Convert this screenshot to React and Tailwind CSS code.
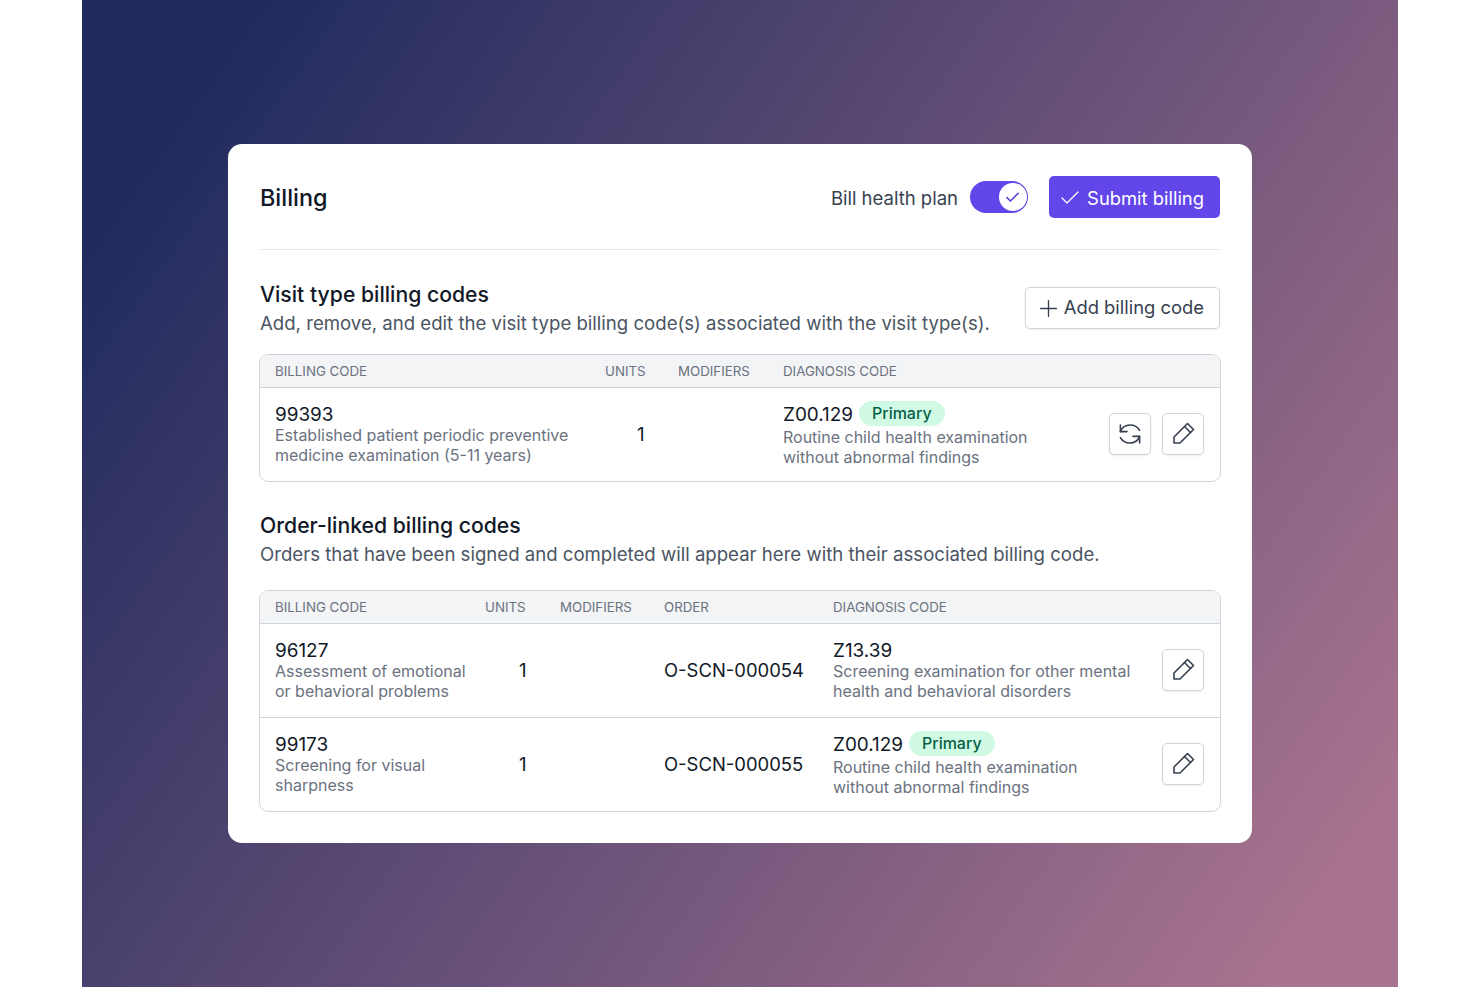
import React from 'react';
import { Check, Plus } from 'lucide-react';

const PencilIcon = () => (
  <svg width="24" height="24" viewBox="0 0 24 24" fill="none" stroke="currentColor" strokeWidth="1.6" strokeLinejoin="round" strokeLinecap="round">
    <path d="M3 21v-6L16.5 1.5l6 6L9 21H3z" />
    <path d="M13.5 4.5l6 6" />
  </svg>
);

const SwapIcon = () => (
  <svg width="24" height="24" viewBox="2 2 20 20" fill="none" stroke="currentColor" strokeWidth="1.35" strokeLinejoin="round" strokeLinecap="round">
    <path d="M4 4.5V10h5.5" />
    <path d="M4 10C5.5 6.2 8.5 4.5 12 4.5c3.5 0 6.5 1.8 8 4.5" />
    <path d="M20 19.5V14h-5.5" />
    <path d="M20 14c-1.5 3.8-4.5 5.5-8 5.5S5.5 17.7 4 15" />
  </svg>
);

const IconButton = ({ children }) => (
  <button className="mb-[2px] flex h-[42px] w-[42px] items-center justify-center rounded-[5px] border border-[#d1d5db] bg-white text-[#374151] shadow-[0_1px_2px_rgba(0,0,0,0.08)]">
    {children}
  </button>
);

const Primary = () => (
  <span className="rounded-full bg-[#d1fae5] px-[13px] text-[16px] leading-[25px] font-medium text-[#065f46]">Primary</span>
);

const CodeCell = ({ code, desc, primary }) => (
  <div className={primary ? 'pb-px' : ''}>
    <div className={`flex items-center gap-[6px] text-[18.9px] leading-[22px] text-[#111827] ${primary ? 'mb-px' : '-mb-px'}`}>
      <span className={primary ? 'pt-[3px]' : ''}>{code}</span>
      {primary && <Primary />}
    </div>
    <div className="text-[16px] leading-[20px] text-[#6b7280]">{desc}</div>
  </div>
);

const Head = ({ children }) => (
  <div className="text-[13.3px] leading-[20px] text-[#6b7280] uppercase">{children}</div>
);

const Section = ({ title, subtitle }) => (
  <div className="-mt-px pb-px">
    <h2 className="text-[21.2px] leading-[28px] font-medium text-[#111827]">{title}</h2>
    <p className="mt-px text-[18.6px] leading-[28px] text-[#4b5563]">{subtitle}</p>
  </div>
);

export default function App() {
  return (
    <div className="flex min-h-[987px] justify-center bg-white" style={{ fontFamily: 'Inter, sans-serif' }}>
      <div className="flex h-[987px] w-[1316px] items-center justify-center bg-[linear-gradient(125deg,#1f2a5e_8%,#a9748f_94%)]">
        <div className="w-[1024px] rounded-[14px] bg-white px-8 pt-8 pb-[31px]">
          <div className="flex h-[74px] items-start justify-between border-b border-[#e5e7eb]">
            <h1 className="pt-[2px] text-[23.4px] leading-[40px] font-medium text-[#111827]">Billing</h1>
            <div className="flex items-center">
              <span className="pt-[3px] text-[18.5px] text-[#374151]">Bill health plan</span>
              <span className="ml-3 flex h-[32px] w-[58px] items-center justify-end rounded-full bg-[#6246ea] pr-[1.5px]">
                <span className="flex h-[28px] w-[28px] items-center justify-center rounded-full bg-white">
                  <Check size={17} strokeWidth={2.3} className="text-[#5b3fd6]" />
                </span>
              </span>
              <button className="ml-[21px] flex h-[42px] w-[171px] items-center justify-end gap-[5px] rounded-[5px] bg-[#6246ea] pr-4 text-[18.4px] text-white">
                <Check size={24} strokeWidth={1.25} className="mt-[2px]" />
                <span className="pt-[3px]">Submit billing</span>
              </button>
            </div>
          </div>

          <div className="mt-[31px] flex items-start justify-between">
            <Section
              title="Visit type billing codes"
              subtitle="Add, remove, and edit the visit type billing code(s) associated with the visit type(s)."
            />
            <button className="mt-[6px] flex h-[42px] w-[195px] items-center justify-end gap-[2px] rounded-[5px] border border-[#d1d5db] bg-white pr-[15px] text-[18.4px] text-[#374151] shadow-[0_1px_2px_rgba(0,0,0,0.08)]">
              <Plus size={27} strokeWidth={1.2} />
              Add billing code
            </button>
          </div>

          <div className="-mx-px mt-[16px] overflow-hidden rounded-[9px] border border-[#d1d5db]">
            <div className="grid h-[33px] grid-cols-[330px_73px_105px_1fr] items-center border-b border-[#d1d5db] bg-[#f3f4f6] pr-4 pl-[15px]">
              <Head>Billing code</Head>
              <Head>Units</Head>
              <Head>Modifiers</Head>
              <Head>Diagnosis code</Head>
            </div>
            <div className="grid h-[93px] grid-cols-[330px_73px_105px_1fr_auto] items-center pr-4 pl-[15px]">
              <CodeCell code="99393" desc={<>Established patient periodic preventive<br />medicine examination (5-11 years)</>} />
              <div className="pl-[32px] text-[18.6px] text-[#111827]">1</div>
              <div />
              <CodeCell primary code="Z00.129" desc={<>Routine child health examination<br />without abnormal findings</>} />
              <div className="flex gap-[11px]">
                <IconButton><SwapIcon /></IconButton>
                <IconButton><PencilIcon /></IconButton>
              </div>
            </div>
          </div>

          <div className="mt-[30px]">
            <Section
              title="Order-linked billing codes"
              subtitle="Orders that have been signed and completed will appear here with their associated billing code."
            />
          </div>

          <div className="-mx-px mt-[21px] overflow-hidden rounded-[9px] border border-[#d1d5db]">
            <div className="grid h-[33px] grid-cols-[210px_75px_104px_169px_1fr] items-center border-b border-[#d1d5db] bg-[#f3f4f6] pr-4 pl-[15px]">
              <Head>Billing code</Head>
              <Head>Units</Head>
              <Head>Modifiers</Head>
              <Head>Order</Head>
              <Head>Diagnosis code</Head>
            </div>
            <div className="grid h-[94px] grid-cols-[210px_75px_104px_169px_1fr_auto] items-center border-b border-[#d1d5db] pr-4 pl-[15px]">
              <CodeCell code="96127" desc={<>Assessment of emotional<br />or behavioral problems</>} />
              <div className="pl-[34px] text-[18.6px] text-[#111827]">1</div>
              <div />
              <div className="text-[18.45px] text-[#111827]">O-SCN-000054</div>
              <CodeCell code="Z13.39" desc={<>Screening examination for other mental<br />health and behavioral disorders</>} />
              <IconButton><PencilIcon /></IconButton>
            </div>
            <div className="grid h-[93px] grid-cols-[210px_75px_104px_169px_1fr_auto] items-center pr-4 pl-[15px]">
              <CodeCell code="99173" desc={<>Screening for visual<br />sharpness</>} />
              <div className="pl-[34px] text-[18.6px] text-[#111827]">1</div>
              <div />
              <div className="text-[18.45px] text-[#111827]">O-SCN-000055</div>
              <CodeCell primary code="Z00.129" desc={<>Routine child health examination<br />without abnormal findings</>} />
              <IconButton><PencilIcon /></IconButton>
            </div>
          </div>
        </div>
      </div>
    </div>
  );
}
